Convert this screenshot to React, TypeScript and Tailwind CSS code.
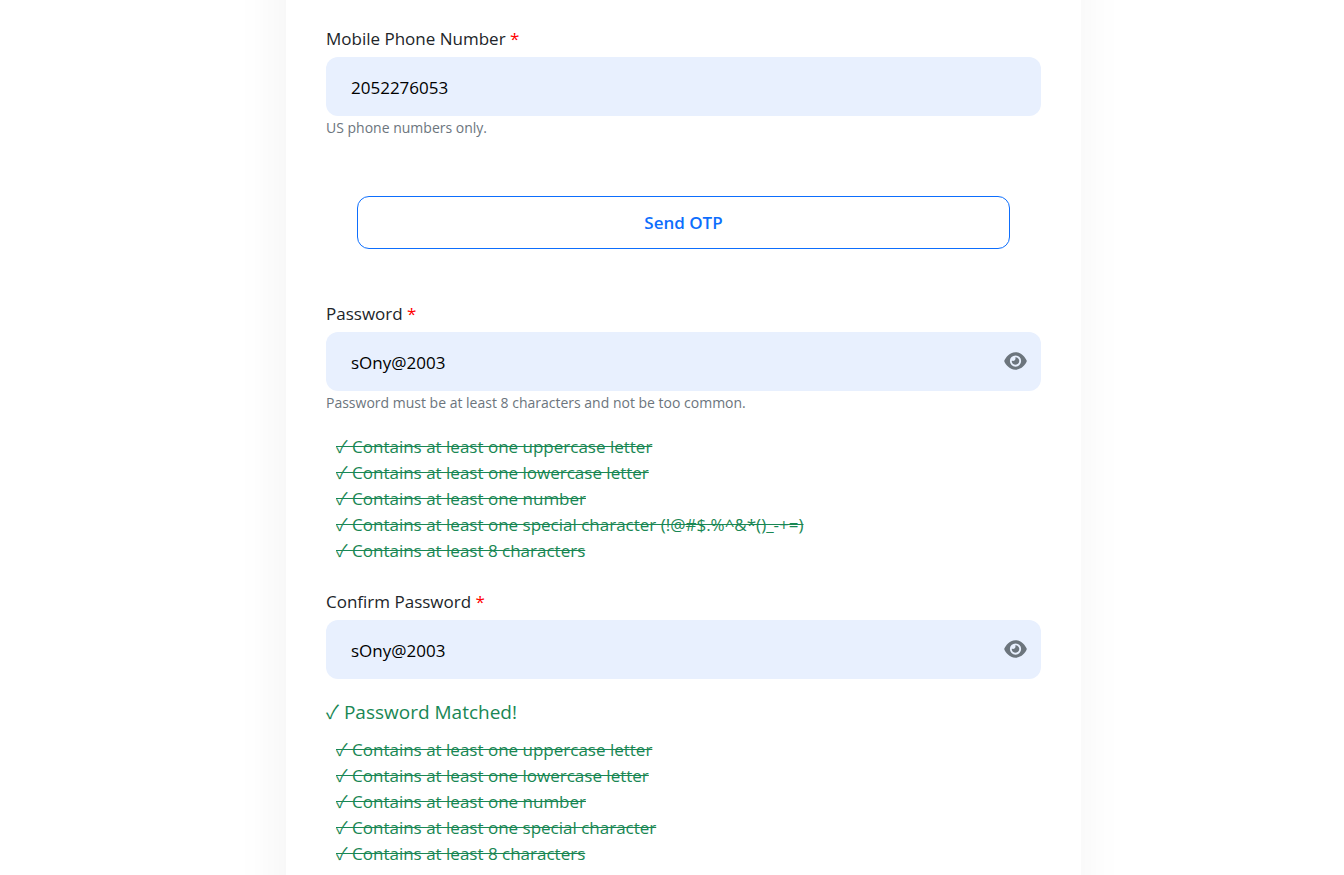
import { useState } from "react";
import type { ReactNode } from "react";
import { FaEye } from "react-icons/fa6";

const PASSWORD_RULES = [
  "Contains at least one uppercase letter",
  "Contains at least one lowercase letter",
  "Contains at least one number",
  "Contains at least one special character (!@#$.%^&*()_-+=)",
  "Contains at least 8 characters",
];

const CONFIRM_RULES = [
  "Contains at least one uppercase letter",
  "Contains at least one lowercase letter",
  "Contains at least one number",
  "Contains at least one special character",
  "Contains at least 8 characters",
];

interface FieldProps {
  id: string;
  label: string;
  value: string;
  onChange: (value: string) => void;
  type?: string;
  children?: ReactNode;
}

function Field({ id, label, value, onChange, type = "text", children }: FieldProps) {
  return (
    <div>
      <label htmlFor={id} className="block leading-[26px] text-[#212529]">
        {label} <span className="text-[#ff0000]">*</span>
      </label>
      <div className="relative mt-[5px]">
        <input
          id={id}
          type={type}
          value={value}
          onChange={(e) => onChange(e.target.value)}
          className="block h-[59px] w-full rounded-xl bg-[#e8f0fe] pt-0.5 pr-14 pl-[25px] text-black outline-none"
        />
        {children}
      </div>
    </div>
  );
}

function ToggleButton({ label, onClick }: { label: string; onClick: () => void }) {
  return (
    <button
      type="button"
      aria-label={label}
      onClick={onClick}
      className="absolute inset-y-0 right-3.5 flex items-center pb-0.5 text-[#6c757d]"
    >
      <FaEye className="h-5 w-[23px]" />
    </button>
  );
}

function RuleList({ rules }: { rules: string[] }) {
  return (
    <ul className="pl-2.5 leading-[26px] text-[#198754]">
      {rules.map((rule) => (
        <li key={rule} className="line-through">
          ✓ {rule}
        </li>
      ))}
    </ul>
  );
}

export default function App() {
  const [phone, setPhone] = useState("2052276053");
  const [password, setPassword] = useState("sOny@2003");
  const [confirm, setConfirm] = useState("sOny@2003");
  const [showPassword, setShowPassword] = useState(true);
  const [showConfirm, setShowConfirm] = useState(true);

  return (
    <div className="flex min-h-screen overflow-hidden bg-white pr-[263px] pl-[286px] font-['Open_Sans','Noto_Sans_CJK_JP',sans-serif] text-[17px]">
      <form
        className="-my-16 min-w-0 flex-1 bg-white px-10 pt-[90px] pb-18 shadow-[-4px_0_50px_rgba(0,0,0,0.05)]"
        onSubmit={(e) => e.preventDefault()}
      >
        <Field
          id="phone"
          label="Mobile Phone Number"
          type="tel"
          value={phone}
          onChange={setPhone}
        />
        <p className="mt-0.5 text-[14px] leading-5 text-[#6c757d]">US phone numbers only.</p>

        <div className="mt-[58px] px-[31px]">
          <button
            type="button"
            className="h-[53px] w-full rounded-xl border border-[#0d6efd] font-semibold text-[#0d6efd]"
          >
            Send OTP
          </button>
        </div>

        <div className="mt-[52px]">
          <Field
            id="password"
            label="Password"
            type={showPassword ? "text" : "password"}
            value={password}
            onChange={setPassword}
          >
            <ToggleButton
              label="Toggle password visibility"
              onClick={() => setShowPassword(!showPassword)}
            />
          </Field>
          <p className="mt-0.5 mb-[21px] text-[14px] leading-5 text-[#6c757d]">
            Password must be at least 8 characters and not be too common.
          </p>
          <RuleList rules={PASSWORD_RULES} />
        </div>

        <div className="mt-[25px]">
          <Field
            id="confirm-password"
            label="Confirm Password"
            type={showConfirm ? "text" : "password"}
            value={confirm}
            onChange={setConfirm}
          >
            <ToggleButton
              label="Toggle confirm password visibility"
              onClick={() => setShowConfirm(!showConfirm)}
            />
          </Field>
          <p className="mt-[18px] mb-2.5 text-[19px] leading-[30px] text-[#198754]">
            ✓ Password Matched!
          </p>
          <RuleList rules={CONFIRM_RULES} />
        </div>
      </form>
    </div>
  );
}
